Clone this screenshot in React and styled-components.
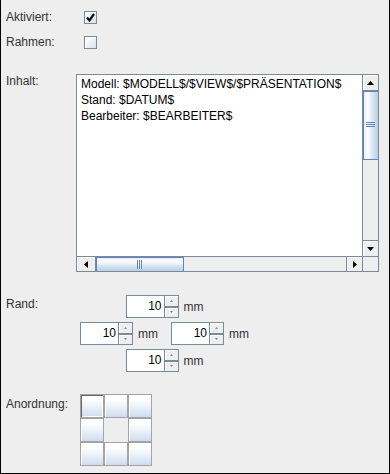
import React from "react";
import styled, { createGlobalStyle } from "styled-components";

const GlobalStyle = createGlobalStyle`
  html, body { margin: 0; padding: 0; background: #eeeeee; }
  body { font-family: "Liberation Sans", Arial, sans-serif; }
  * { box-sizing: border-box; }
`;

const Frame = styled.div`
  width: 390px;
  height: 474px;
  background: #eeeeee;
  border: 1px solid #000;
  border-top: none;
  padding-left: 5px;
  display: flex;
  flex-direction: column;
  overflow: hidden;
`;

const Row = styled.div`
  display: flex;
  align-items: flex-start;
  margin-top: ${(p) => p.$mt}px;
`;

const Label = styled.div`
  width: 70px;
  flex: none;
  font-size: 12px;
  color: #333333;
  line-height: ${(p) => p.$lh || 14}px;
  padding-top: ${(p) => p.$pt || 0}px;
  white-space: nowrap;
`;

const CheckBox = styled.div`
  width: 13px;
  height: 13px;
  margin-left: 8px;
  border: 1px solid #7a8a99;
  background: linear-gradient(135deg, #ffffff 0%, #f2f6fa 40%, #d4e0ec 100%);
  box-shadow: inset 1px 1px 0 #ffffff;
  display: flex;
  align-items: center;
  justify-content: center;
`;

const ScrollPane = styled.div`
  width: 303px;
  height: 198px;
  border: 1px solid #7a8a99;
  display: grid;
  grid-template-columns: 1fr 16px;
  grid-template-rows: 1fr 15px;
  background: #eeeeee;
`;

const TextArea = styled.div`
  background: #ffffff;
  font-size: 12px;
  line-height: 16px;
  color: #000;
  padding: 1px 0 0 4px;
  white-space: pre;
  overflow: hidden;
`;

const VBar = styled.div`
  border-left: 1px solid #7a8a99;
  display: flex;
  flex-direction: column;
  background: #eeeeee;
`;

const HBar = styled.div`
  border-top: 1px solid #7a8a99;
  display: flex;
  background: #eeeeee;
`;

const Corner = styled.div`
  border-top: 1px solid #7a8a99;
  border-left: 1px solid #7a8a99;
  background: #eeeeee;
`;

const ArrowBtn = styled.div`
  flex: none;
  ${(p) => (p.$vertical ? "height: 16px;" : `width: ${p.$w || 16}px;`)}
  background: #eeeeee;
  box-shadow: inset 1px 1px 0 #ffffff;
  display: flex;
  align-items: center;
  justify-content: center;
  ${(p) => p.$edge === "bottom" && "border-bottom: 1px solid #7a8a99;"}
  ${(p) => p.$edge === "top" && "border-top: 1px solid #7a8a99;"}
  ${(p) => p.$edge === "right" && "border-right: 1px solid #7a8a99;"}
  ${(p) => p.$edge === "left" && "border-left: 1px solid #7a8a99;"}
`;

const Thumb = styled.div`
  flex: none;
  ${(p) =>
    p.$vertical
      ? `height: ${p.$size}px;
         background: linear-gradient(to right, #dde8f3 0%, #ffffff 30%, #dde8f3 60%, #b8cfe5 100%);
         border-bottom: 1px solid #6382bf;`
      : `width: ${p.$size}px;
         background: linear-gradient(to bottom, #dde8f3 0%, #ffffff 30%, #dde8f3 60%, #b8cfe5 100%);
         border-right: 1px solid #6382bf;`}
  box-shadow: inset 1px 1px 0 #6382bf;
  display: flex;
  align-items: center;
  justify-content: center;
`;

const Track = styled.div`
  flex: 1;
  background: #eeeeee;
`;

const SpinBlock = styled.div`
  margin-left: 4px;
  display: flex;
  flex-direction: column;
  align-items: center;
  gap: 4px;
`;

const SpinRow = styled.div`
  display: flex;
  gap: 13px;
`;

const SpinUnit = styled.div`
  display: flex;
  align-items: center;
  gap: 5px;
  font-size: 12px;
  color: #333333;
`;

const Spinner = styled.div`
  display: flex;
  width: 53px;
  height: 23px;
`;

const SpinField = styled.div`
  width: 38px;
  height: 23px;
  background: #ffffff;
  border: 1px solid #7a8a99;
  border-right: none;
  box-shadow: inset 0 -1px 0 #ffffff;
  font-size: 12px;
  color: #000;
  text-align: right;
  padding-right: 2px;
  line-height: 21px;
`;

const SpinButtons = styled.div`
  width: 15px;
  display: flex;
  flex-direction: column;
  border: 1px solid #7a8a99;
`;

const SpinBtn = styled.div`
  flex: 1;
  background: #eeeeee;
  box-shadow: inset 1px 1px 0 #ffffff;
  display: flex;
  align-items: center;
  justify-content: center;
  ${(p) => p.$top && "border-bottom: 2px solid #7a8a99;"}
`;

const Grid = styled.div`
  margin-left: 4px;
  display: grid;
  grid-template-columns: repeat(3, 24px);
  grid-template-rows: repeat(3, 24px);
`;

const Cell = styled.div`
  border: 1px solid #a3a3a3;
  background: linear-gradient(to bottom, #f7fafc 0%, #ffffff 20%, #eaf1f8 55%, #cddded 100%);
  box-shadow: ${(p) =>
    p.$selected ? "inset 1px 1px 0 #666666, inset -1px -1px 0 #ffffff" : "inset 1px 1px 0 #ffffff"};
`;

const Empty = styled.div``;

const Check = () => (
  <svg width="9" height="9" viewBox="0 0 9 9">
    <path d="M1 4.5 L3.5 7.5 L8 1" stroke="#111" strokeWidth="2.2" fill="none" strokeLinecap="butt" />
  </svg>
);

const Tri = ({ dir, size = 7, color = "#000" }) => {
  const h = Math.ceil(size / 2);
  const pts = {
    up: `0,${h} ${size / 2},0 ${size},${h}`,
    down: `0,0 ${size / 2},${h} ${size},0`,
    left: `${h},0 0,${size / 2} ${h},${size}`,
    right: `0,0 ${h},${size / 2} 0,${size}`,
  }[dir];
  const vert = dir === "up" || dir === "down";
  return (
    <svg width={vert ? size : h} height={vert ? h : size} viewBox={`0 0 ${vert ? size : h} ${vert ? h : size}`}>
      <polygon points={pts} fill={color} />
    </svg>
  );
};

const GripV = () => (
  <svg width="9" height="6" viewBox="0 0 9 6">
    <rect x="0" y="0" width="9" height="1" fill="#6382bf" />
    <rect x="0" y="2" width="9" height="1" fill="#6382bf" />
    <rect x="0" y="4" width="9" height="1" fill="#6382bf" />
  </svg>
);

const GripH = () => (
  <svg width="6" height="9" viewBox="0 0 6 9">
    <rect x="0" y="0" width="1" height="9" fill="#6382bf" />
    <rect x="2" y="0" width="1" height="9" fill="#6382bf" />
    <rect x="4" y="0" width="1" height="9" fill="#6382bf" />
  </svg>
);

const Spin = ({ value }) => (
  <SpinUnit>
    <Spinner>
      <SpinField>{value}</SpinField>
      <SpinButtons>
        <SpinBtn $top>
          <Tri dir="up" size={3} color="#7a8a99" />
        </SpinBtn>
        <SpinBtn>
          <Tri dir="down" size={3} color="#7a8a99" />
        </SpinBtn>
      </SpinButtons>
    </Spinner>
    mm
  </SpinUnit>
);

export default function App() {
  const text = "Modell: $MODELL$/$VIEW$/$PRÄSENTATION$\nStand: $DATUM$\nBearbeiter: $BEARBEITER$";
  const cells = [true, true, true, true, false, true, true, true, true];
  return (
    <>
      <GlobalStyle />
      <Frame>
        <Row $mt={11}>
          <Label $lh={13}>Aktiviert:</Label>
          <CheckBox>
            <Check />
          </CheckBox>
        </Row>
        <Row $mt={12}>
          <Label $lh={13}>Rahmen:</Label>
          <CheckBox />
        </Row>
        <Row $mt={25}>
          <Label>Inhalt:</Label>
          <ScrollPane>
            <TextArea>{text}</TextArea>
            <VBar>
              <ArrowBtn $vertical $edge="bottom">
                <Tri dir="up" />
              </ArrowBtn>
              <Thumb $vertical $size={69}>
                <GripV />
              </Thumb>
              <Track />
              <ArrowBtn $vertical $edge="top">
                <Tri dir="down" />
              </ArrowBtn>
            </VBar>
            <HBar>
              <ArrowBtn $edge="right" $w={19}>
                <Tri dir="left" />
              </ArrowBtn>
              <Thumb $size={88}>
                <GripH />
              </Thumb>
              <Track />
              <ArrowBtn $edge="left">
                <Tri dir="right" />
              </ArrowBtn>
            </HBar>
            <Corner />
          </ScrollPane>
        </Row>
        <Row $mt={23}>
          <Label $pt={2}>Rand:</Label>
          <SpinBlock>
            <Spin value="10" />
            <SpinRow>
              <Spin value="10" />
              <Spin value="10" />
            </SpinRow>
            <Spin value="10" />
          </SpinBlock>
        </Row>
        <Row $mt={22}>
          <Label $pt={3}>Anordnung:</Label>
          <Grid>
            {cells.map((c, i) => (c ? <Cell key={i} $selected={i === 0} /> : <Empty key={i} />))}
          </Grid>
        </Row>
      </Frame>
    </>
  );
}
